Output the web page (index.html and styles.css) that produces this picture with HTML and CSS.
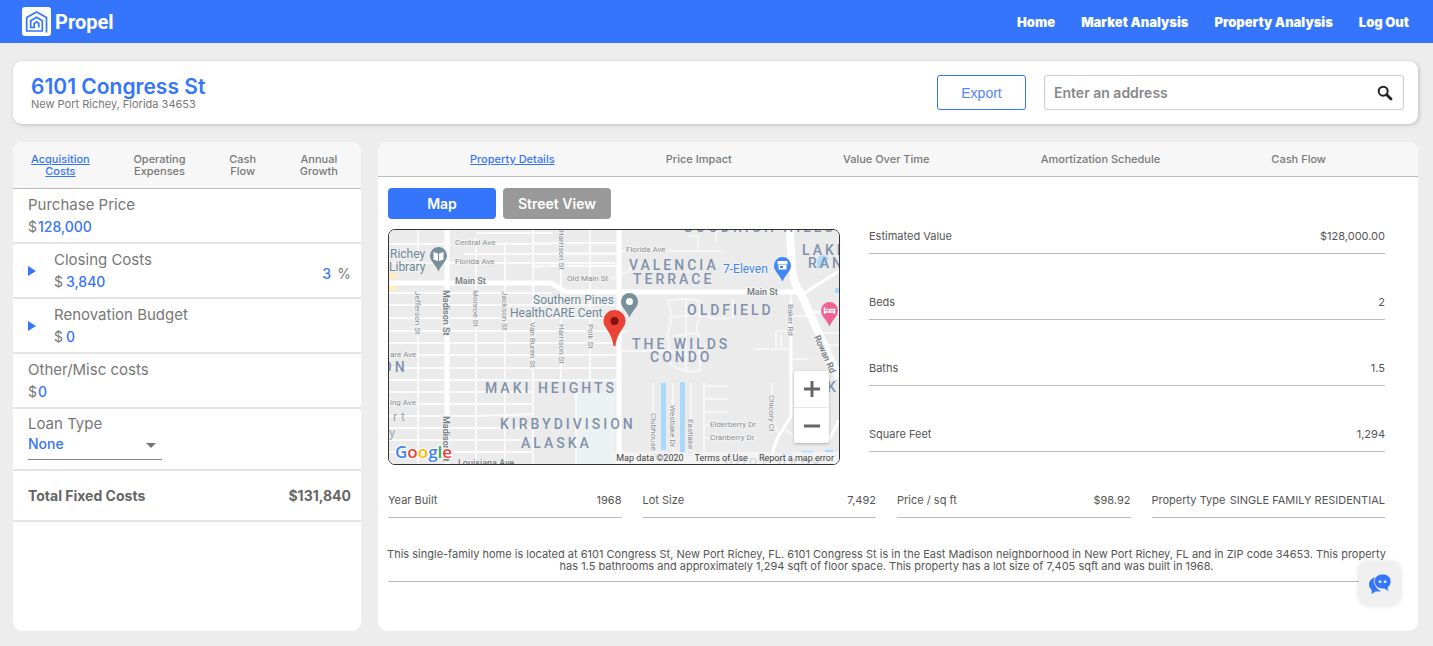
FILE: index.html
```html
<!DOCTYPE html>
<html lang="en">
<head>
<meta charset="utf-8">
<meta name="viewport" content="width=device-width, initial-scale=1">
<title>Propel - Property Analysis</title>
<link rel="stylesheet" href="styles.css">
</head>
<body>
<header class="topbar">
  <a class="brand" href="#">
    <svg class="brand-mark" viewBox="0 0 29 29" aria-hidden="true">
      <rect width="29" height="29" rx="3" fill="#fff"/>
      <path d="M24.500 25.500V10.500L14.600 5 4.700 10.500V24H20.300V13.800L14.500 10.200 8.700 13.800V20.500H12.200V16.500L14.500 14.800 16.800 16.500V20.500" fill="none" stroke="#3575fc" stroke-width="1.700"/>
    </svg>
    <span class="brand-name">Propel</span>
  </a>
  <nav class="topnav">
    <a href="#">Home</a>
    <a href="#">Market Analysis</a>
    <a href="#">Property Analysis</a>
    <a href="#">Log Out</a>
  </nav>
</header>

<main class="page">
  <section class="address-card">
    <div class="address">
      <h1>6101 Congress St</h1>
      <p>New Port Richey, Florida 34653</p>
    </div>
    <button class="export" type="button">Export</button>
    <form class="search">
      <input type="text" placeholder="Enter an address" aria-label="Enter an address">
      <button type="button" aria-label="Search">
        <svg viewBox="0 0 16 16" aria-hidden="true"><circle cx="6.200" cy="6.200" r="4.500" fill="none" stroke="#222" stroke-width="2"/><path d="M9.500 9.500L14 14" stroke="#222" stroke-width="2.800" stroke-linecap="round"/></svg>
      </button>
    </form>
  </section>

  <div class="columns">
    <section class="panel costs">
      <nav class="tabs cost-tabs">
        <a class="active" href="#">Acquisition<br>Costs</a>
        <a href="#">Operating<br>Expenses</a>
        <a href="#">Cash<br>Flow</a>
        <a href="#">Annual<br>Growth</a>
      </nav>
      <div class="row">
        <div class="field">
          <label for="price">Purchase Price</label>
          <div class="money tight"><span>$</span><input id="price" type="text" value="128,000"></div>
        </div>
      </div>
      <div class="row">
        <button class="expand" type="button" aria-label="Expand closing costs"></button>
        <div class="field">
          <label for="closing">Closing Costs</label>
          <div class="money"><span>$</span><input id="closing" type="text" value="3,840"></div>
        </div>
        <div class="percent"><input type="text" value="3" aria-label="Closing costs percent"><span>%</span></div>
      </div>
      <div class="row">
        <button class="expand" type="button" aria-label="Expand renovation budget"></button>
        <div class="field">
          <label for="reno">Renovation Budget</label>
          <div class="money"><span>$</span><input id="reno" type="text" value="0"></div>
        </div>
      </div>
      <div class="row">
        <div class="field">
          <label for="misc">Other/Misc costs</label>
          <div class="money tight"><span>$</span><input id="misc" type="text" value="0"></div>
        </div>
      </div>
      <div class="row loan">
        <div class="field">
          <label for="loan">Loan Type</label>
          <div class="select"><select id="loan"><option>None</option></select></div>
        </div>
      </div>
      <div class="row total"><span>Total Fixed Costs</span><span>$131,840</span></div>
    </section>

    <section class="panel details">
      <nav class="tabs detail-tabs">
        <a class="active" href="#">Property Details</a>
        <a href="#">Price Impact</a>
        <a href="#">Value Over Time</a>
        <a href="#">Amortization Schedule</a>
        <a href="#">Cash Flow</a>
      </nav>
      <div class="details-body">
        <div class="overview">
          <div class="location">
            <div class="views">
              <button class="view current" type="button">Map</button>
              <button class="view" type="button">Street View</button>
            </div>
            <div class="map">
              <svg class="map-canvas" viewBox="0 0 450 234" preserveAspectRatio="xMidYMid slice" role="img" aria-label="Map of the property">
                <rect width="450" height="234" fill="#ebebeb"/>
                <path d="M187 162H226V234H187Z" fill="#ecf1f1"/>
                <path d="M0 43h8v6H0zM0 55h8v6H0z" fill="#fbeec3"/>
                <g fill="#a9dafb"><path d="M272 153h5v67h-5zM291 152h5v71h-5zM429 27l6-2 5 3-7 10h-5zM446 58h4v5h-4zM406 195h3v6h-3zM392 222h12v3h-12zM413 221h11v3h-11zM436 220h8v3h-8z"/></g>
                <g class="road-local">
                  <path d="M29 0V40M29 63V234M87 8V234M116 12V234M144 0V234M172 0V150M201 0V150M187 150V234"/>
                  <path d="M0 14H58M80 14H163M87 3H163M58 33H226M75 24H230M0 33H58M0 63H162M144 13H230M172 23H230M144 36H230M0 75H226M0 88H226M0 101H226M0 113H226M0 125H226M0 138H230M0 150H230M0 162H144M0 174H144M0 186H87M0 198H144M0 210H144M0 222H144M87 186L144 184"/>
                </g>
                <g class="road-minor">
                  <path d="M230 21H333M309 5V21M298 6H309M327 0V12M222 49L239 42 245 33M279 71Q295 67 310 71L311 87Q305 96 310 106L311 141Q296 144 281 134L279 103 283 87ZM279 88L311 84M283 106L309 103M281 121Q297 129 310 122M297 70V143M318 86Q322 90 344 88V68M230 121H283M222 105L240 101M264 153V226M284 153V220M302 153V226M315 153V234M315 156H339M315 169H339M315 182H339M315 195H368M315 208H368M383 153V190L390 204M364 119H402M387 119V101H402M392 119V105M402 129H420M402 148V78M402 86H425M425 103H450M433 115H450M402 71V60M395 198L408 209M144 38L165 35"/>
                </g>
                <g class="road-mid"><path d="M402 71V186L393 201Q386 209 381 234M414 64L450 41M418 82L450 82M450 190L440 210"/></g>
                <g class="road-main">
                  <path d="M58 0V234M230 0V234M0 53H162L177 62H408"/>
                </g>
                <path class="road-wide" d="M401 0L403 40Q405 54 413 66L450 148"/>
                <g class="label">
                  <text x="66" y="15">Central Ave</text><text x="66" y="34">Florida Ave</text>
                  <text x="237" y="22">Florida Ave</text><text x="178" y="51">Old Main St</text>
                  <text x="1" y="127">are Ave</text><text x="1" y="175">ing Ave</text>
                  <text x="321" y="197">Elderberry Dr</text><text x="321" y="210">Cranberry Dr</text>
                  <text transform="translate(26 61) rotate(90)">Jefferson St</text>
                  <text transform="translate(84 60) rotate(90)">Monroe St</text>
                  <text transform="translate(113 61) rotate(90)">Jackson St</text>
                  <text transform="translate(141 92) rotate(90)">Van Buren St</text>
                  <text transform="translate(170 94) rotate(90)">Harrison St</text>
                  <text transform="translate(170 0) rotate(90)">Harrison St</text>
                  <text transform="translate(199 94) rotate(90)">Polk St</text>
                  <text transform="translate(262 183) rotate(90)">Clubhouse D</text>
                  <text transform="translate(281 175) rotate(90)">Westlake Dr</text>
                  <text transform="translate(299 189) rotate(90)">Eastlake D</text>
                  <text transform="translate(399 74) rotate(90)">Baker Rd</text>
                  <text transform="translate(380 165) rotate(90)">Chicory Ct</text>
                </g>
                <g class="label strong">
                  <text x="66" y="54">Main St</text><text x="358" y="65">Main St</text>
                  <text x="69" y="236">Louisiana Ave</text>
                  <text transform="translate(54 60) rotate(90)">Madison St</text>
                  <text transform="translate(54 186) rotate(90)">Madison St</text>
                  <text transform="translate(425 107) rotate(66)">Rowan Rd</text>
                </g>
                <g class="area">
                  <text x="240" y="40">VALENCIA</text><text x="244" y="54">TERRACE</text>
                  <text x="298" y="85">OLDFIELD</text>
                  <text x="243" y="119">THE WILDS</text><text x="261" y="132">CONDO</text>
                  <text x="96" y="163">MAKI HEIGHTS</text>
                  <text x="111" y="199">KIRBYDIVISION</text><text x="132" y="218">ALASKA</text>
                  <text x="413" y="25">LAKE</text><text x="419" y="38">RANC</text>
                  <text x="-7" y="142">ON</text><text x="438" y="162">KE</text>
                  <text x="294" y="2">GOODRICH HILLS</text><text x="335" y="239">PORT PARK</text>
                </g>
                <g class="town"><text x="4" y="191">rt</text><text x="0" y="207">y</text></g>
                <g class="poi">
                  <text x="1" y="28">Richey</text><text x="0" y="41">Library</text>
                  <text x="144" y="74">Southern Pines</text><text x="121" y="87">HealthCARE Cent</text>
                  <text class="shop" x="334" y="43">7-Eleven</text>
                </g>
                <g fill="#78909c"><path d="M49.500 17a8.500 8.500 0 0 1 8.500 8.500c0 6-5 8-8.500 16-3.500-8-8.500-10-8.500-16A8.500 8.500 0 0 1 49.500 17z"/><path d="M240.500 63a8.500 8.500 0 0 1 8.500 8.500c0 6-5 8-8.500 16-3.500-8-8.500-10-8.500-16A8.500 8.500 0 0 1 240.500 63z"/></g>
                <path d="M44.500 22l4.500 1.500 1 0 4.500-1.500v7.500L50 31h-1l-4.500-1.500z" fill="#fff"/><path d="M49.500 23v8" stroke="#78909c"/>
                <circle cx="240.500" cy="71.500" r="3.500" fill="#fff"/>
                <path d="M393.500 27a8.500 8.500 0 0 1 8.500 8.500c0 6-5 8-8.500 16-3.500-8-8.500-10-8.500-16A8.500 8.500 0 0 1 393.500 27z" fill="#4285f4"/>
                <path d="M388.500 31h10v3.500h-10zM389.500 35h8v4.500h-8z" fill="#fff"/><path d="M391 36h3v2h-3z" fill="#4285f4"/>
                <path d="M440.500 72a8.500 8.500 0 0 1 8.500 8.500c0 6-5 8-8.500 16-3.500-8-8.500-10-8.500-16A8.500 8.500 0 0 1 440.500 72z" fill="#f06292"/>
                <path d="M435.500 77v7M435.500 82h10V79.500h-5V82M445.500 80v4" fill="none" stroke="#fff" stroke-width="1.500"/><circle cx="438" cy="79.500" r="1" fill="#fff"/>
                <path d="M225.500 80a11 11 0 0 1 11 11c0 7-8.500 11-10 25h-2c-1.500-14-10-18-10-25a11 11 0 0 1 11-11z" fill="#ea4335"/>
                <circle cx="225.500" cy="91" r="4" fill="#811411"/>
                <g class="google"><text x="6" y="228"><tspan fill="#4285f4">G</tspan><tspan fill="#ea4335">o</tspan><tspan fill="#fbbc04">o</tspan><tspan fill="#4285f4">g</tspan><tspan fill="#34a853">l</tspan><tspan fill="#ea4335">e</tspan></text></g>
              </svg>
              <div class="zoom-control">
                <button type="button" aria-label="Zoom in"><svg viewBox="0 0 16 16"><path d="M8 0v16M0 8h16" stroke="#666" stroke-width="3"/></svg></button>
                <button type="button" aria-label="Zoom out"><svg viewBox="0 0 16 16"><path d="M0 8h16" stroke="#666" stroke-width="3"/></svg></button>
              </div>
              <div class="attribution"><span>Map data ©2020</span><a href="#">Terms of Use</a><a href="#">Report a map error</a></div>
            </div>
          </div>
          <dl class="facts">
            <div class="fact"><dt>Estimated Value</dt><dd>$128,000.00</dd></div>
            <div class="fact"><dt>Beds</dt><dd>2</dd></div>
            <div class="fact"><dt>Baths</dt><dd>1.5</dd></div>
            <div class="fact"><dt>Square Feet</dt><dd>1,294</dd></div>
          </dl>
        </div>
        <dl class="facts-row">
          <div class="fact"><dt>Year Built</dt><dd>1968</dd></div>
          <div class="fact"><dt>Lot Size</dt><dd>7,492</dd></div>
          <div class="fact"><dt>Price / sq ft</dt><dd>$98.92</dd></div>
          <div class="fact"><dt>Property Type</dt><dd>SINGLE FAMILY RESIDENTIAL</dd></div>
        </dl>
        <div class="description">
          <p>This single-family home is located at 6101 Congress St, New Port Richey, FL. 6101 Congress St is in the East Madison neighborhood in New Port Richey, FL and in ZIP code 34653. This property has 1.5 bathrooms and approximately 1,294 sqft of floor space. This property has a lot size of 7,405 sqft and was built in 1968.</p>
        </div>
      </div>
    </section>
  </div>
</main>

<button class="chat" type="button" aria-label="Open chat">
  <svg viewBox="0 0 24 22" aria-hidden="true">
    <path d="M8 4C3.500 5 1 8 1 11.500c0 2.200 1 4 2.600 5.300L3.800 21l3.700-2.600c2 .4 4 .2 5.500-.4C8.500 16.500 5 11 8 4z" fill="#3575fc"/>
    <path d="M14.500 1C19.500 1 23 4.300 23 8.500c0 2.600-1.200 4.600-3 6l.6 4.200-4.100-2.800C10.500 16.500 6.300 13 6.300 8.500 6.300 4.300 9.800 1 14.500 1z" fill="#3575fc" stroke="#f0f0f0" stroke-width=".8"/>
    <path d="M10.800 7.500h2.600V10h-2.600zM15.800 7.500h2.600V10h-2.600z" fill="#dfe9ff"/>
  </svg>
</button>
</body>
</html>
```

FILE: styles.css
```css
* { box-sizing: border-box; }

body {
  margin: 0;
  min-height: 100vh;
  display: flex;
  flex-direction: column;
  background: #ededed;
  color: #777;
  font-family: Inter, "Open Sans", sans-serif;
  font-size: 14px;
}

a { color: inherit; text-decoration: none; }
button, input, select { font: inherit; color: inherit; margin: 0; padding: 0; border: 0; background: none; }
button { cursor: pointer; }
h1, p, dl, dd { margin: 0; }
svg { display: block; }

.topbar {
  display: flex;
  align-items: center;
  justify-content: space-between;
  height: 43px;
  padding: 0 24px 0 22px;
  background: #3575fc;
  color: #fff;
}
.brand { display: flex; align-items: center; gap: 4px; }
.brand-mark { width: 29px; height: 29px; }
.brand-name { font: 700 20px/28px Roboto, sans-serif; }
.topnav { display: flex; gap: 26px; font-size: 13px; line-height: 18px; font-weight: 900; }

.page {
  flex: 1;
  display: flex;
  flex-direction: column;
  gap: 18px;
  padding: 18px 15px 15px 13px;
}

.address-card {
  display: flex;
  align-items: center;
  gap: 18px;
  padding: 14px 14px 14px 18px;
  border-radius: 9px;
  background: #fff;
  box-shadow: 1px 1px 4px rgba(0, 0, 0, .2);
}
.address { flex: 1; }
.address h1 { color: #3575fc; font-size: 21px; line-height: 23px; font-weight: 600; }
.address p { font-size: 11px; line-height: 12px; }
.export {
  width: 89px;
  height: 35px;
  border: 1px solid #3575fc;
  border-radius: 3px;
  color: #5584f5;
  font-family: "Liberation Sans", sans-serif;
}
.search {
  display: flex;
  align-items: center;
  width: 360px;
  height: 35px;
  padding: 0 10px 0 9px;
  border: 1px solid #ccc;
  border-radius: 3px;
}
.search input { flex: 1; min-width: 0; outline: 0; }
.search input::placeholder { color: #888; opacity: 1; font-weight: 600; }
.search svg { width: 16px; height: 16px; }

.columns { flex: 1; display: grid; grid-template-columns: 348fr 1040fr; gap: 17px; }
.panel { border-radius: 9px; background: #fff; overflow: hidden; }
.tabs {
  display: flex;
  align-items: center;
  justify-content: space-between;
  border-bottom: 1px solid #bbb;
  background: #f7f7f7;
  font-size: 11px;
  line-height: 12px;
  font-weight: 500;
  text-align: center;
}
.tabs .active { color: #3575fc; text-decoration: underline; }
.cost-tabs { height: 47px; padding: 0 23px 0 18px; }
.detail-tabs { height: 35px; padding: 0 92px; }

.row {
  display: flex;
  align-items: center;
  min-height: 55px;
  padding: 0 10px 0 15px;
  border-bottom: 2px solid #e4e4e4;
}
.field { flex: 1; display: flex; flex-direction: column; }
.field label { font-size: 15px; line-height: 22px; }
.money { display: flex; align-items: center; gap: 3px; line-height: 22px; }
.money.tight { gap: 1px; }
.money input { width: 120px; color: #3575fc; font-weight: 500; }
.expand {
  width: 26px;
  height: 10px;
}
.expand::before {
  content: "";
  display: block;
  width: 0;
  border-left: 8px solid #3575fc;
  border-top: 5px solid transparent;
  border-bottom: 5px solid transparent;
}
.percent { display: flex; gap: 6px; padding-top: 6px; }
.percent input { width: 9px; color: #3575fc; font-weight: 500; }
.row.loan { min-height: 62px; align-items: flex-start; padding-top: 4px; }
.select { position: relative; width: 134px; border-bottom: 1px solid #888; }
.select select { display: block; width: 100%; height: 24px; padding-bottom: 7px; appearance: none; color: #3575fc; font-weight: 500; }
.select::after {
  content: "";
  position: absolute;
  right: 6px;
  top: 8px;
  border-top: 5px solid #777;
  border-left: 5px solid transparent;
  border-right: 5px solid transparent;
  pointer-events: none;
}
.row.total { min-height: 51px; justify-content: space-between; color: #666; font-weight: 700; }

.details-body { padding: 11px 33px 30px 10px; color: #555; font-size: 11px; }
.overview { display: grid; grid-template-columns: 452fr 516fr; gap: 29px; }
.views { display: flex; gap: 7px; margin-bottom: 10px; }
.view {
  width: 108px;
  height: 31px;
  border-radius: 4px;
  background: #999;
  color: #fff;
  font-size: 14px;
  font-weight: 600;
}
.view.current { background: #3575fc; }

.map {
  position: relative;
  border: 1px solid #333;
  border-radius: 7px;
  overflow: hidden;
}
.map-canvas { width: 100%; height: auto; font-family: Roboto, sans-serif; }
.road-local, .road-minor, .road-mid, .road-main, .road-wide { fill: none; stroke: #fff; }
.road-local { stroke-width: 2; stroke: #fafafa; }
.road-minor { stroke-width: 2; stroke: #f6f6f8; }
.road-mid { stroke-width: 3; }
.road-main { stroke-width: 5; }
.road-wide { stroke-width: 8; }
.label { font-size: 8px; fill: #8a8f92; stroke: #f2f2f2; stroke-width: 2px; paint-order: stroke; }
.label.strong { font-size: 9px; fill: #71787c; font-weight: 500; }
.area { font-size: 14px; font-weight: 500; letter-spacing: 3px; fill: #8191ab; }
.town { font-size: 13px; letter-spacing: 3px; fill: #a4a9b0; }
.poi { font-size: 12px; fill: #6b8694; stroke: #f2f2f2; stroke-width: 2px; paint-order: stroke; }
.poi .shop { fill: #4285f4; }
.google { font: 600 17px "Open Sans", sans-serif; stroke: #fff; stroke-width: 2px; paint-order: stroke; }

.zoom-control {
  position: absolute;
  right: 10px;
  bottom: 21px;
  width: 35px;
  border-radius: 2px;
  background: #fff;
  box-shadow: 0 1px 3px rgba(0, 0, 0, .25);
}
.zoom-control button { display: grid; place-items: center; width: 100%; height: 36px; }
.zoom-control button + button { border-top: 1px solid #e6e6e6; }
.zoom-control svg { width: 16px; height: 16px; }
.attribution {
  position: absolute;
  right: 0;
  bottom: 0;
  display: flex;
  gap: 11px;
  padding: 0 5px 0 4px;
  background: rgba(245, 245, 245, .75);
  color: #444;
  font: 9px/12px Roboto, sans-serif;
}

.facts { display: flex; flex-direction: column; padding-bottom: 13px; }
.facts .fact { flex: 1; }
.fact {
  display: flex;
  align-items: flex-end;
  justify-content: space-between;
  padding-bottom: 10px;
  border-bottom: 1px solid #bbb;
  line-height: 14px;
  white-space: nowrap;
}
.facts-row { display: grid; grid-template-columns: repeat(4, 1fr); gap: 21px; margin-top: 28px; }
.description {
  margin-top: 30px;
  padding-bottom: 9px;
  border-bottom: 1px solid #bbb;
}
.description p { margin: 0 -5px; line-height: 12px; text-align: center; }

.chat {
  position: fixed;
  right: 33px;
  bottom: 41px;
  display: grid;
  place-items: center;
  width: 41px;
  height: 43px;
  border-radius: 9px;
  background: #f0f0f0;
  box-shadow: 0 0 5px rgba(0, 0, 0, .16);
}
.chat svg { width: 24px; height: 22px; }
```
